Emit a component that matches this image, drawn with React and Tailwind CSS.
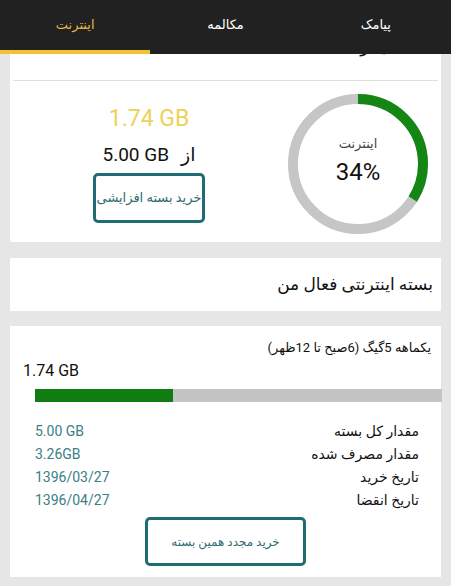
import React from 'react';

const font = { fontFamily: "Roboto, 'DejaVu Sans', sans-serif" };

const tabs = [
  { label: 'پیامک', active: false },
  { label: 'مکالمه', active: false },
  { label: 'اینترنت', active: true },
];

const details = [
  { label: 'مقدار کل بسته', value: '5.00 GB' },
  { label: 'مقدار مصرف شده', value: '3.26GB' },
  { label: 'تاریخ خرید', value: '1396/03/27' },
  { label: 'تاریخ انقضا', value: '1396/04/27' },
];

const UsageRing = ({ percent }) => {
  const r = 65;
  const c = 2 * Math.PI * r;
  return (
    <div className="relative w-[140px] h-[140px]">
      <svg width="140" height="140" viewBox="0 0 140 140" className="-rotate-90">
        <circle cx="70" cy="70" r={r} fill="none" stroke="#c6c6c6" strokeWidth="10" />
        <circle
          cx="70"
          cy="70"
          r={r}
          fill="none"
          stroke="#138613"
          strokeWidth="10"
          strokeDasharray={`${(c * percent) / 100} ${c}`}
        />
      </svg>
      <div className="absolute inset-0 flex flex-col items-center pt-[40px]">
        <span className="text-[13px] leading-[20px] text-[#444]">اینترنت</span>
        <span className="text-[24px] leading-[30px] text-[#111] mt-[3px]">{percent}%</span>
      </div>
    </div>
  );
};

const App = () => {
  return (
    <div dir="rtl" style={font} className="w-[451px] h-[586px] bg-[#e6e6e6] flex flex-col overflow-hidden">
      <div className="relative z-10 h-[54px] bg-[#212121] grid grid-cols-3 shrink-0">
        {tabs.map((tab) => (
          <div
            key={tab.label}
            className={`flex items-start justify-center pt-[15px] text-[13px] ${
              tab.active ? 'text-[#e2b94b] border-b-4 border-[#f1c232]' : 'text-white'
            }`}
          >
            {tab.label}
          </div>
        ))}
      </div>

      <div className="flex-1 overflow-hidden">
        {/* usage card, its title is scrolled under the tabs */}
        <div className="mx-[10px] -mt-[22px] bg-white rounded-[2px]">
          <div className="text-[18px] leading-[28px] pr-[50px] text-[#111]">اینترنت</div>
          <div className="mt-[20px] mx-[3px] border-t border-[#e0e0e0]"></div>
          <div className="flex h-[161px]">
            <div className="w-[153px] pr-[13px] pt-[13px] flex justify-center">
              <UsageRing percent={34} />
            </div>
            <div className="flex-1 flex flex-col items-center pt-[24px]">
              <span dir="ltr" className="text-[23px] leading-[28px] text-[#ebd25a]">1.74 GB</span>
              <div className="mt-[10px] flex items-center gap-[12px] text-[19px] leading-[24px] text-[#111]">
                <span>از</span>
                <span dir="ltr">5.00 GB</span>
              </div>
              <button className="mt-[6px] w-[112px] h-[50px] border-[3px] border-[#1f6d73] rounded-[5px] text-[13px] text-[#2f6b70]">
                خرید بسته افزایشی
              </button>
            </div>
          </div>
        </div>

        <div className="mx-[10px] mt-[16px] h-[53px] bg-white flex items-center pr-[8px]">
          <span className="text-[17px] text-[#111]">بسته اینترنتی فعال من</span>
        </div>

        <div className="mx-[10px] mt-[15px] bg-white pt-[12px] pb-[11px]">
          <div className="pr-[10px] text-[13px] leading-[20px] text-[#111]">یکماهه 5گیگ (6صبح تا 12ظهر)</div>
          <div dir="ltr" className="mt-[2px] pl-[13px] text-[16px] leading-[22px] text-[#111]">1.74 GB</div>
          <div dir="ltr" className="mt-[7px] ml-[25px] mr-[-1px] h-[13px] bg-[#c4c4c4] flex">
            <div className="h-full bg-[#0f7d0f]" style={{ width: '34%' }}></div>
          </div>
          <div className="mt-[18px] pr-[22px] pl-[25px]">
            {details.map((row) => (
              <div key={row.label} className="flex justify-between h-[23px] items-center">
                <span className="text-[14px] text-[#111]">{row.label}</span>
                <span dir="ltr" className="text-[14px] text-[#3a8086]">{row.value}</span>
              </div>
            ))}
          </div>
          <div className="flex justify-center mt-[5px]">
            <button className="w-[161px] h-[49px] border-[3px] border-[#1f6d73] rounded-[5px] text-[12px] text-[#2f6b70]">
              خرید مجدد همین بسته
            </button>
          </div>
        </div>
      </div>
    </div>
  );
};

export default App;
